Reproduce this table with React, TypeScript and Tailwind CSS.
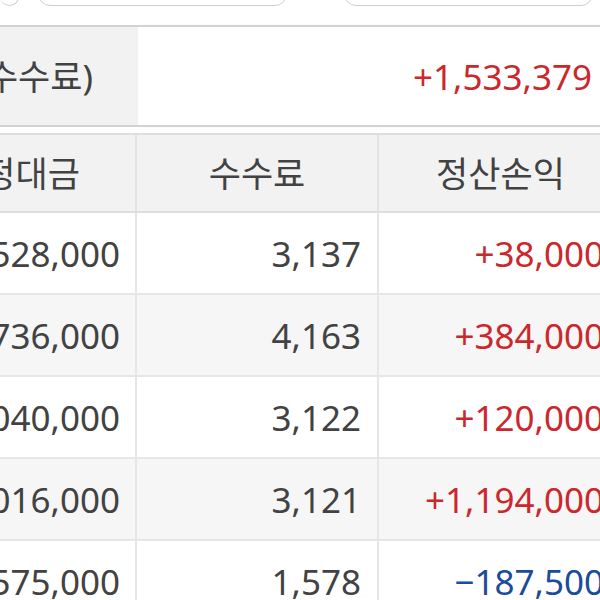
const rows = [
  { amount: "1,528,000", fee: "3,137", pnl: "+38,000" },
  { amount: "2,736,000", fee: "4,163", pnl: "+384,000" },
  { amount: "2,040,000", fee: "3,122", pnl: "+120,000" },
  { amount: "2,016,000", fee: "3,121", pnl: "+1,194,000" },
  { amount: "1,575,000", fee: "1,578", pnl: "-187,500" },
];

const font = "font-['Noto_Sans','Noto_Sans_CJK_KR',sans-serif]";

export default function App() {
  return (
    <div
      className={`w-[600px] h-[600px] overflow-hidden bg-white text-[35px] leading-none text-[#424242] ${font}`}
    >
      {/* 상단 버튼 */}
      <div className="flex h-[6px] items-end">
        <div className="w-[19px] h-[30px] shrink-0 rounded-b-[12px] border border-[#cfcfcf] border-l-0" />
        <div className="ml-[19px] w-[249px] h-[30px] shrink-0 rounded-b-[12px] border border-[#cfcfcf]" />
        <div className="ml-[57px] w-[249px] h-[30px] shrink-0 rounded-b-[12px] border border-[#cfcfcf]" />
      </div>

      {/* 합계 */}
      <div className="mt-[19px] flex h-[102px] border-t-2 border-b-2 border-[#d2d2d2]">
        <div className="w-[138px] shrink-0 bg-[#f2f2f2] flex items-center justify-end overflow-hidden whitespace-nowrap pr-[45px]">
          실현손익(세금/수수료)
        </div>
        <div className="flex-1 flex items-center justify-end pr-[8px] text-[#cb282d] whitespace-nowrap">
          +1,533,379
        </div>
      </div>

      {/* 테이블 */}
      <div className="mt-[6px] ml-[-104px] w-[726px]">
        <div className="grid grid-cols-[241px_242px_243px] h-[80px] bg-[#f2f2f2] border-t-2 border-b-2 border-[#dedede]">
          <div className="flex items-center justify-center whitespace-nowrap border-r-2 border-[#e2e2e2]">
            약정대금
          </div>
          <div className="flex items-center justify-center whitespace-nowrap border-r-2 border-[#e2e2e2]">
            수수료
          </div>
          <div className="flex items-center justify-center whitespace-nowrap">
            정산손익
          </div>
        </div>
        {rows.map((r, i) => (
          <div
            key={i}
            className={`grid grid-cols-[241px_242px_243px] h-[82px] border-b-2 border-[#e6e6e6] ${
              i % 2 === 1 ? "bg-[#f6f6f6]" : "bg-white"
            }`}
          >
            <div className="flex items-center justify-end pr-[15px] whitespace-nowrap border-r-2 border-[#e6e6e6]">
              {r.amount}
            </div>
            <div className="flex items-center justify-end pr-[16px] whitespace-nowrap border-r-2 border-[#e6e6e6]">
              {r.fee}
            </div>
            <div
              className={`flex items-center justify-end pr-[18px] whitespace-nowrap ${
                r.pnl.startsWith("-") ? "text-[#1b4c9a]" : "text-[#cb282d]"
              }`}
            >
              {r.pnl.startsWith("-") ? "−" + r.pnl.slice(1) : r.pnl}
            </div>
          </div>
        ))}
      </div>
    </div>
  );
}
